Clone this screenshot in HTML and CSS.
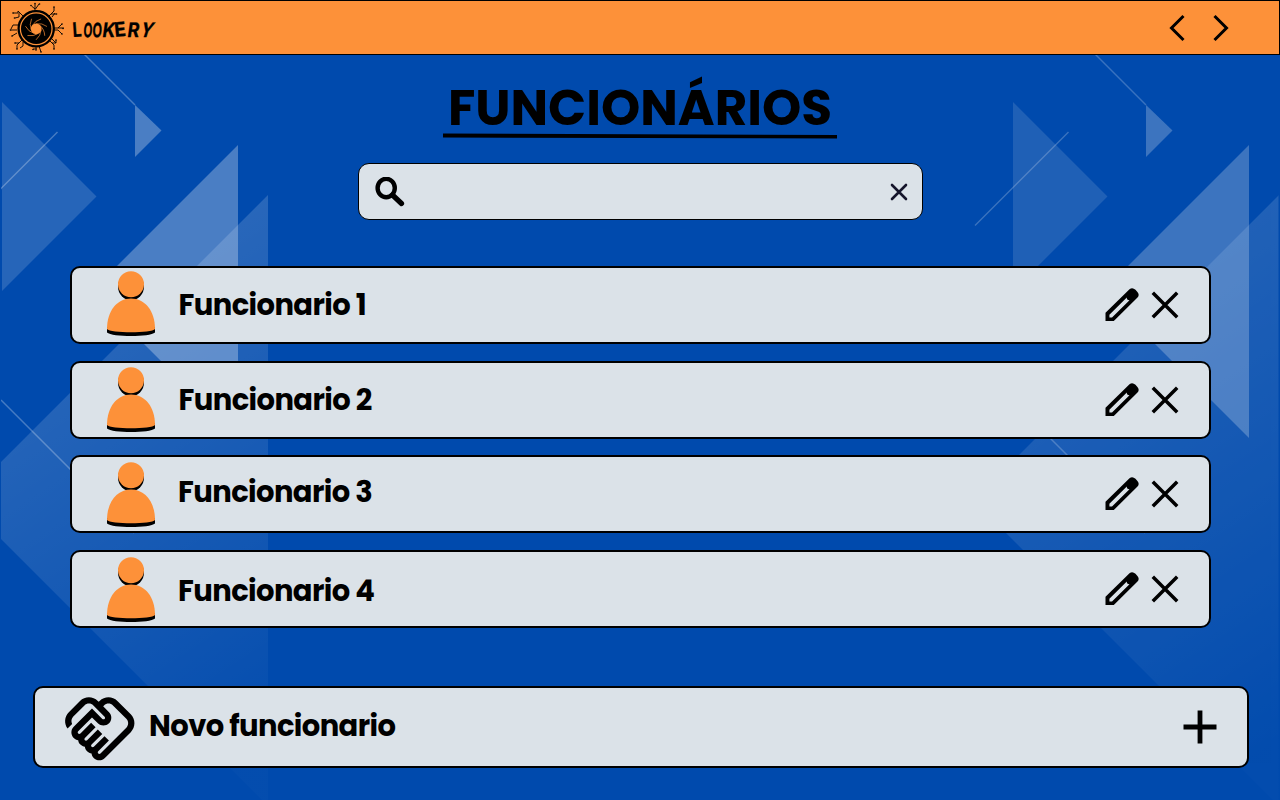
FILE: index.html
```html
<!DOCTYPE html>
<html lang="pt-BR">
<head>
<meta charset="utf-8">
<title>Lookery - Funcionários</title>
<link rel="stylesheet" href="styles.css">
</head>
<body>
<svg class="backdrop" viewBox="0 0 1280 800" aria-hidden="true">
  <defs>
    <linearGradient id="fade" gradientUnits="userSpaceOnUse" x1="1060" y1="340" x2="1310" y2="720">
      <stop offset="0" stop-color="#fff" stop-opacity=".16"/>
      <stop offset="1" stop-color="#fff" stop-opacity=".015"/>
    </linearGradient>
    <clipPath id="edge"><path d="M1 0H1278.500V800H1z"/></clipPath>
    <g id="shapes">
      <path d="M1013 102L1107.500 196.500L1013 291z" fill="#fff" fill-opacity=".15"/>
      <path d="M1279 195L973.500 500.500L1279 806z" fill="url(#fade)"/>
      <path d="M1249 145V438L1102.500 291.500z" fill="#fff" fill-opacity=".29"/>
      <path d="M1146 105L1172.500 130.500L1146 157z" fill="#fff" fill-opacity=".29"/>
      <path d="M1095 54L1146 105M975 225.500L1068.500 132M1012 400L1145 533" fill="none" stroke="#fff" stroke-opacity=".27" stroke-width="1.500"/>
    </g>
  </defs>
  <g clip-path="url(#edge)">
    <use href="#shapes" x="-1011"/>
    <use href="#shapes" opacity=".82"/>
  </g>
</svg>

<svg class="symbols" aria-hidden="true">
  <symbol id="person" viewBox="0 0 50 66">
    <ellipse cx="25" cy="15.800" rx="13" ry="13.200" fill="#000"/>
    <ellipse cx="25" cy="13.200" rx="13" ry="13" fill="#fd9139"/>
    <path d="M1 56V61.500C6 66.300 44 66.300 49 61.500V56z" fill="#000"/>
    <path d="M1 58C1 40 11 27.500 25 27.500S49 40 49 58C46 62.300 4 62.300 1 58z" fill="#fd9139"/>
  </symbol>
  <symbol id="pencil" viewBox="0 0 36 36">
    <path fill-rule="evenodd" d="M1.500 25.800L25.500 2.200Q28.500 0 31.500 2.800L33.200 4.700Q36 7.700 33.500 10.500L9.800 34H1.500zM5.400 27.700V30.400H8L25.500 13.200Q22.500 13 22.800 10.500z"/>
  </symbol>
  <symbol id="cross" viewBox="0 0 28 28">
    <path d="M1.800 1.800L26.200 26.200M26.200 1.800L1.800 26.200" fill="none" stroke="#000" stroke-width="3.500"/>
  </symbol>
</svg>

<header class="topbar">
  <div class="brand">
    <svg class="emblem" viewBox="0 0 56 52" aria-hidden="true">
      <defs><path id="blade" d="M27.200 21.800Q33 20.800 38 24.500" fill="none" stroke="#fd9139" stroke-width=".65"/></defs>
      <circle cx="27.200" cy="26.800" r="17.600" fill="none" stroke="#000" stroke-width="2.300"/>
      <circle cx="27.200" cy="26.800" r="15.200"/>
      <circle cx="27.200" cy="26.800" r="5.400" fill="#fd9139"/>
      <use href="#blade"/>
      <use href="#blade" transform="rotate(51.400 27.200 26.800)"/>
      <use href="#blade" transform="rotate(102.900 27.200 26.800)"/>
      <use href="#blade" transform="rotate(154.300 27.200 26.800)"/>
      <use href="#blade" transform="rotate(205.700 27.200 26.800)"/>
      <use href="#blade" transform="rotate(257.100 27.200 26.800)"/>
      <use href="#blade" transform="rotate(308.600 27.200 26.800)"/>
      <g fill="none" stroke="#000" stroke-width=".9">
        <path d="M26 9V2M26 7L22.500 4M26.500 7L30 2M14 14L9 9V11H4M10 11V15L6 16M9 23H4L2 27M8 28H1.500M8 31L3 34M13 38L8 43V47M10 41H6M14 40V44L11 46M27 45V49M30 44L32 50M28 47H24M41 39L45 43V47M43 41H47V38M43 37L47 41M45 26H55M45 28H49L53 32M49 26L53 22M40 14L45 9V5M42 12H47M43 15L46 11"/>
      </g>
      <g><circle cx="22" cy="3.500" r=".8"/><circle cx="26" cy="1.500" r=".8"/><circle cx="30.500" cy="2" r=".8"/><circle cx="4" cy="11" r=".8"/><circle cx="5.500" cy="16" r=".8"/><circle cx="1.500" cy="28" r=".8"/><circle cx="3" cy="34" r=".8"/><circle cx="6" cy="41" r=".8"/><circle cx="8" cy="47" r=".8"/><circle cx="24" cy="47.500" r=".8"/><circle cx="32" cy="50" r=".8"/><circle cx="45" cy="47" r=".8"/><circle cx="47" cy="38" r=".8"/><circle cx="53" cy="22" r=".8"/><circle cx="54" cy="26.500" r=".8"/><circle cx="53" cy="32" r=".8"/><circle cx="45" cy="5" r=".8"/><circle cx="47.500" cy="12" r=".8"/></g>
    </svg>
    <span class="wordmark"><i class="w1">L</i><i class="w2">O</i><i class="w3">O</i><i class="w4">K</i><i class="w5">E</i><i class="w6">R</i><i class="w7">Y</i></span>
  </div>
  <nav class="history">
    <svg viewBox="0 0 16 28"><path d="M14.500 2L2.500 14L14.500 26" fill="none" stroke="#000" stroke-width="3"/></svg>
    <svg viewBox="0 0 16 28"><path d="M1.500 2L13.500 14L1.500 26" fill="none" stroke="#000" stroke-width="3"/></svg>
  </nav>
</header>

<main class="content">
  <div class="heading">
    <h1 class="title">FUNCIONÁRIOS</h1>
    <svg class="rule" viewBox="0 0 394 6"><path d="M0 .500L394 2V5.500L0 4.500z"/></svg>
  </div>
  <div class="search">
    <svg class="glass" viewBox="0 0 30 30"><ellipse cx="11.200" cy="11" rx="8.600" ry="9.200" fill="none" stroke="#000" stroke-width="4.400"/><path d="M17.500 18L26.500 26.500" stroke="#000" stroke-width="5.200" stroke-linecap="round"/></svg>
    <svg class="clear" viewBox="0 0 18 18"><path d="M2 2L16 16M16 2L2 16" stroke="#15152b" stroke-width="2.600" stroke-linecap="round"/></svg>
  </div>
  <ul class="staff">
    <li class="row"><svg class="person"><use href="#person"/></svg><span class="name">Funcionario 1</span><svg class="pencil"><use href="#pencil"/></svg><svg class="cross"><use href="#cross"/></svg></li>
    <li class="row second"><svg class="person"><use href="#person"/></svg><span class="name">Funcionario 2</span><svg class="pencil"><use href="#pencil"/></svg><svg class="cross"><use href="#cross"/></svg></li>
    <li class="row raised"><svg class="person"><use href="#person"/></svg><span class="name">Funcionario 3</span><svg class="pencil"><use href="#pencil"/></svg><svg class="cross"><use href="#cross"/></svg></li>
    <li class="row lowered"><svg class="person"><use href="#person"/></svg><span class="name">Funcionario 4</span><svg class="pencil"><use href="#pencil"/></svg><svg class="cross"><use href="#cross"/></svg></li>
  </ul>
  <div class="add">
    <svg class="handshake" viewBox="0 0 24 24"><path d="M12.220 19.850c-.180.180-.500.210-.710 0-.180-.180-.210-.500 0-.710l3.390-3.390-1.410-1.410-3.390 3.390c-.190.200-.510.190-.710 0-.210-.210-.180-.530 0-.710l3.390-3.390-1.410-1.410-3.390 3.390c-.180.180-.500.210-.710 0-.190-.190-.190-.510 0-.710l3.390-3.390-1.420-1.410-3.390 3.390c-.180.180-.500.210-.710 0-.190-.200-.190-.510 0-.710L9.520 8.400l1.870 1.860c.950.950 2.590.940 3.540 0 .980-.980.980-2.560 0-3.540l-1.860-1.860.280-.280c.780-.780 2.050-.780 2.830 0l4.240 4.240c.780.780.780 2.050 0 2.830l-8.200 8.200zm9.610-6.780c1.560-1.560 1.560-4.090 0-5.660l-4.240-4.240c-1.560-1.560-4.090-1.560-5.660 0l-.280.280-.280-.280c-1.560-1.560-4.090-1.560-5.660 0L2.170 6.710C.750 8.130.620 10.340 1.770 11.900l1.450-1.450c-.390-.750-.260-1.700.370-2.330l3.540-3.540c.780-.780 2.050-.780 2.830 0l3.560 3.560c.180.180.210.500 0 .710-.210.210-.530.180-.710 0L9.520 5.570l-5.800 5.790c-.980.970-.980 2.560 0 3.540.390.390.890.630 1.420.700.070.520.300 1.020.700 1.420.400.400.900.630 1.420.700.070.520.300 1.020.700 1.420.400.400.900.630 1.420.700.070.540.310 1.030.700 1.420.470.470 1.100.730 1.770.730.670 0 1.300-.260 1.770-.730l8.210-8.190z"/></svg>
    <span class="name">Novo funcionario</span>
    <svg class="plus" viewBox="0 0 34 34"><path d="M17 .500V33.500M.500 17H33.500" stroke="#000" stroke-width="4.800"/></svg>
  </div>
</main>
</body>
</html>
```
FILE: styles.css
```css
* { box-sizing: border-box; }
body {
  margin: 0;
  width: 1280px;
  height: 800px;
  overflow: hidden;
  background: #004aad;
  color: #000;
  font-family: Poppins, Inter, sans-serif;
}
svg { display: block; flex: none; }
.symbols { display: none; }
.backdrop {
  position: absolute;
  inset: 0;
  width: 1280px;
  height: 800px;
  z-index: -1;
}
.topbar {
  height: 55px;
  display: flex;
  justify-content: space-between;
  padding: 0 50px 0 8px;
  background: #fd9139;
  border: 1.5px solid #000;
}
.brand { display: flex; }
.emblem { width: 56px; height: 52px; margin-top: 1px; }
.wordmark {
  display: flex;
  margin: 17px 0 0 8px;
  font: 700 20px/24px Inter, sans-serif;
  -webkit-text-stroke: .3px #000;
}
.wordmark i { font-style: normal; display: block; transform-origin: 0 50%; }
.wordmark .w1 { width: 10px; transform: rotate(-4deg) scaleX(.8); }
.wordmark .w2 { width: 9px; transform: rotate(4deg) scaleX(.58); }
.wordmark .w3 { width: 10px; transform: rotate(4deg) scaleX(.62); }
.wordmark .w4 { width: 12.5px; transform: skewX(-8deg) scaleX(.88); }
.wordmark .w5 { width: 12px; transform: rotate(-6deg) scaleX(.95); }
.wordmark .w6 { width: 12px; transform: skewX(-8deg) scaleX(.9); }
.wordmark .w7 { width: 13px; transform: skewX(-18deg) scaleX(.85); }
.history { display: flex; gap: 28px; padding-top: 13px; }
.history svg { width: 16px; height: 28px; }
.content { display: flex; flex-direction: column; align-items: center; }
.heading {
  width: 394px;
  height: 108px;
  display: flex;
  flex-direction: column;
  align-items: center;
  padding-top: 23px;
}
.title {
  margin: 0;
  height: 55px;
  font-size: 50px;
  line-height: 60px;
  font-weight: 700;
  white-space: nowrap;
}
.rule { width: 394px; height: 6px; }
.search {
  width: 565px;
  height: 57px;
  display: flex;
  align-items: center;
  justify-content: space-between;
  padding: 0 14px 0 16px;
  background: #dbe2e8;
  border: 1.5px solid #000;
  border-radius: 11px;
}
.glass { width: 30px; height: 30px; }
.clear { width: 18px; height: 18px; }
.staff {
  list-style: none;
  width: 1141.5px;
  margin: 46px 0 0 .5px;
  padding: 0;
  display: flex;
  flex-direction: column;
  gap: 16.7px;
}
.row {
  height: 78px;
  display: flex;
  align-items: center;
  padding: 0 30.5px 0 34px;
  background: #dbe2e8;
  border: 2px solid #000;
  border-radius: 10px;
}
.person { width: 50px; height: 66px; margin-top: -2px; }
.second .person { margin-top: 1px; }
.row:nth-child(n+3) .person { margin-top: 2px; }
.name {
  flex: 1;
  font-size: 29px;
  line-height: 36px;
  font-weight: 700;
  letter-spacing: -.6px;
  white-space: nowrap;
}
.row .name { margin-left: 23px; }
.row.second .name { padding-top: 1px; }
.row.raised .name { margin-left: 22.5px; padding: 0 0 4px; }
.row.lowered .name { margin-left: 22.5px; padding-top: 4px; }
.pencil { width: 36px; height: 36px; margin: 0 11px 0 -1px; }
.cross { width: 28px; height: 28px; }
.add {
  width: 1216px;
  height: 82px;
  margin: 58px 0 0 2px;
  display: flex;
  align-items: center;
  padding: 0 30px 0 27px;
  background: #dbe2e8;
  border: 2px solid #000;
  border-radius: 10px;
}
.handshake { width: 75.600px; height: 75.600px; margin-top: 3px; }
.add .name { margin-left: 11.5px; padding-bottom: 2px; }
.plus { width: 34px; height: 34px; }
```
